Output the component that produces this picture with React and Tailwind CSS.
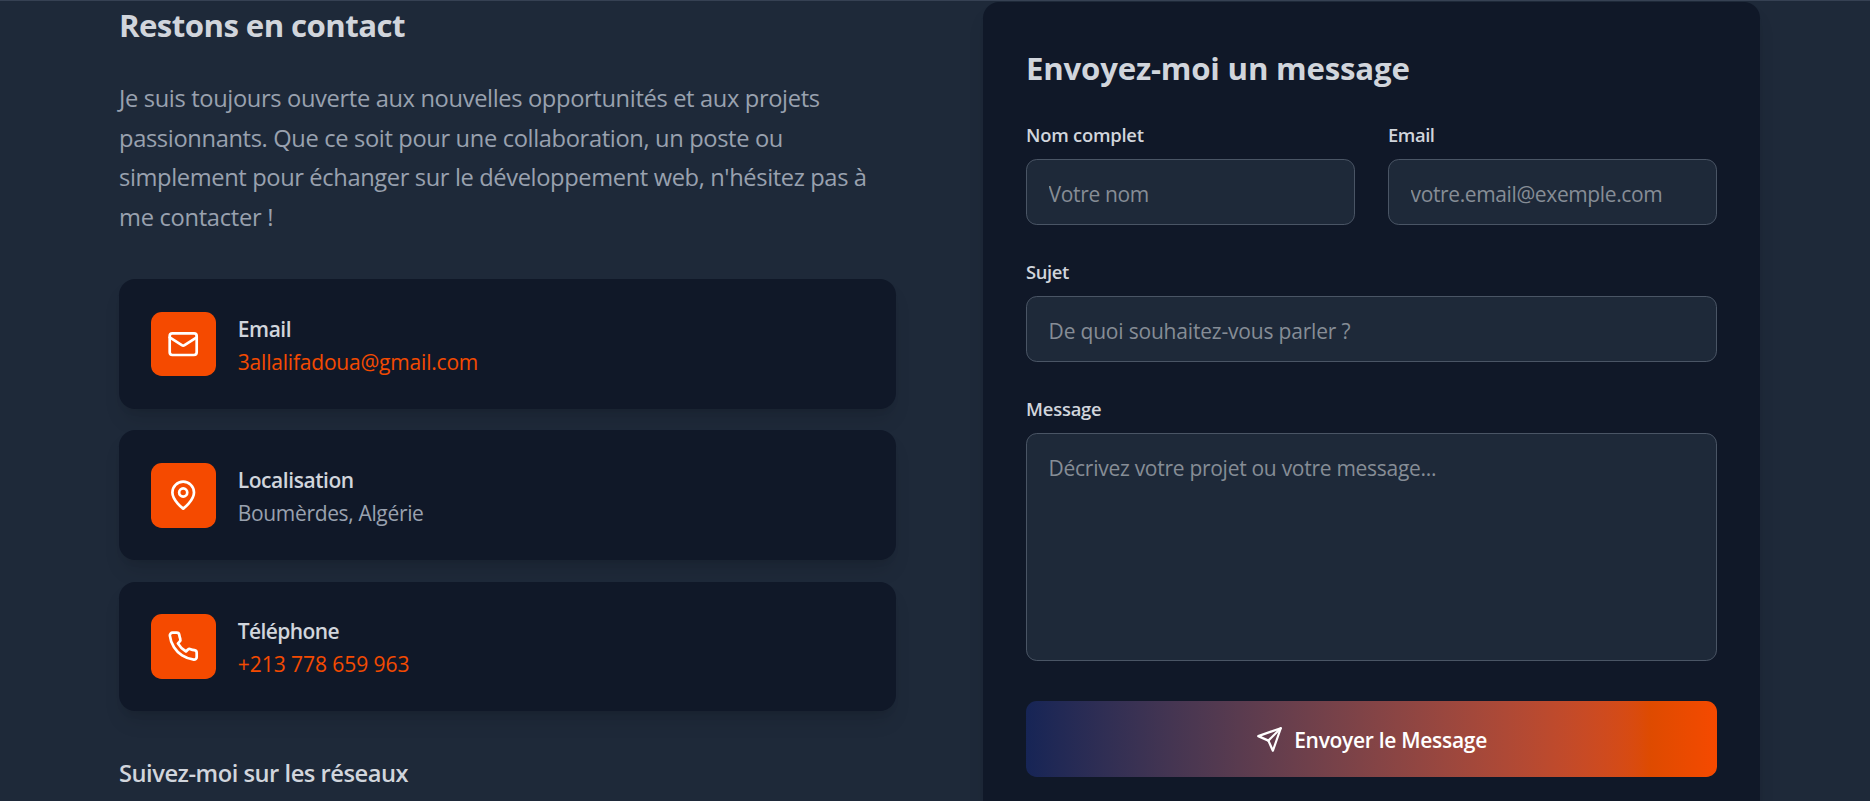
function Icon({ className, strokeWidth = 2, children }) {
  return (
    <svg
      viewBox="0 0 24 24"
      fill="none"
      stroke="currentColor"
      strokeWidth={strokeWidth}
      strokeLinecap="round"
      strokeLinejoin="round"
      className={className}
      aria-hidden="true"
    >
      {children}
    </svg>
  );
}

function MailIcon({ className }) {
  return (
    <Icon className={className}>
      <rect width="20" height="16" x="2" y="4" rx="2" />
      <path d="m22 7-8.97 5.7a1.94 1.94 0 0 1-2.06 0L2 7" />
    </Icon>
  );
}

function PinIcon({ className }) {
  return (
    <Icon className={className}>
      <path d="M20 10c0 6-8 12-8 12s-8-6-8-12a8 8 0 0 1 16 0Z" />
      <circle cx="12" cy="10" r="3" />
    </Icon>
  );
}

function PhoneIcon({ className }) {
  return (
    <Icon className={className}>
      <path d="M22 16.92v3a2 2 0 0 1-2.18 2 19.79 19.79 0 0 1-8.63-3.07 19.5 19.5 0 0 1-6-6 19.79 19.79 0 0 1-3.07-8.67A2 2 0 0 1 4.11 2h3a2 2 0 0 1 2 1.72 12.84 12.84 0 0 0 .7 2.81 2 2 0 0 1-.45 2.11L8.09 9.91a16 16 0 0 0 6 6l1.27-1.27a2 2 0 0 1 2.11-.45 12.84 12.84 0 0 0 2.81.7A2 2 0 0 1 22 16.92z" />
    </Icon>
  );
}

function SendIcon({ className }) {
  return (
    <Icon className={className}>
      <path d="m22 2-7 20-4-9-9-4Z" />
      <path d="M22 2 11 13" />
    </Icon>
  );
}

function ContactCard({ icon: IconComponent, title, titleClass, value, valueClass }) {
  return (
    <div className="flex h-[129.6px] items-start gap-[21.6px] rounded-[16.2px] bg-gray-900 p-[32.4px] shadow-[0_13.5px_20px_-4px_rgb(0_0_0/0.1),0_5.4px_8px_-5.4px_rgb(0_0_0/0.1)]">
      <div className="flex size-[64.8px] shrink-0 items-center justify-center rounded-[10.8px] bg-orange-600 pr-[1.5px] text-white">
        <IconComponent className="size-[32.4px]" />
      </div>
      <div className="pt-[1.2px] text-[21px] leading-[32.8px]">
        <h4 className={`font-semibold text-gray-300 ${titleClass}`}>{title}</h4>
        <p className={valueClass}>{value}</p>
      </div>
    </div>
  );
}

function Field({ label, labelClass, children }) {
  return (
    <label className="flex flex-col gap-[9px]">
      <span className={`text-[18.4px] leading-[30px] font-semibold text-gray-300 ${labelClass}`}>
        {label}
      </span>
      {children}
    </label>
  );
}

const control =
  "w-full rounded-[10.8px] border border-gray-600 bg-gray-800 px-[21.6px] text-[21px] text-gray-300 outline-none placeholder:text-[#868d96]";

export default function App() {
  return (
    <div className="h-[801px] overflow-hidden border-t border-gray-700 bg-gray-800 pt-px font-['Open_Sans','Noto_Sans',sans-serif]">
      <main className="ml-[119px] grid w-[1641px] grid-cols-[777px_777px] justify-between">
        <section>
          <h3 className="h-[43.2px] pt-[2px] text-[31.2px] leading-[43.2px] font-bold tracking-[-0.58px] text-gray-300">
            Restons en contact
          </h3>
          <p className="mt-[34.2px] mb-[41.8px] text-[23.7px] leading-[39.5px] whitespace-nowrap text-gray-400">
            <span className="tracking-[-0.36px]">
              Je suis toujours ouverte aux nouvelles opportunités et aux projets
            </span>
            <br />
            <span className="tracking-[-0.36px]">
              passionnants. Que ce soit pour une collaboration, un poste ou
            </span>
            <br />
            <span className="tracking-[-0.38px]">
              simplement pour échanger sur le développement web, n'hésitez pas à
            </span>
            <br />
            <span className="tracking-[-0.3px]">me contacter !</span>
          </p>
          <div className="flex flex-col gap-[21.6px]">
            <ContactCard
              icon={MailIcon}
              title="Email"
              titleClass="tracking-[-0.45px]"
              value="3allalifadoua@gmail.com"
              valueClass="tracking-[-0.2px] text-orange-600"
            />
            <ContactCard
              icon={PinIcon}
              title="Localisation"
              titleClass="tracking-[-0.45px]"
              value="Boumèrdes, Algérie"
              valueClass="tracking-[-0.34px] text-gray-400"
            />
            <ContactCard
              icon={PhoneIcon}
              title="Téléphone"
              titleClass="tracking-[-0.6px]"
              value="+213 778 659 963"
              valueClass="tracking-[-0.05px] text-orange-600"
            />
          </div>
          <h4 className="mt-[44px] text-[23.7px] leading-[37.8px] font-semibold tracking-[-0.48px] text-gray-300">
            Suivez-moi sur les réseaux
          </h4>
        </section>

        <section className="h-[860px] rounded-[16.2px] bg-gray-900 px-[43px] pt-[43px] shadow-[0_13.5px_20px_-4px_rgb(0_0_0/0.1),0_5.4px_8px_-5.4px_rgb(0_0_0/0.1)]">
          <h3 className="h-[43px] pt-[2px] text-[31.2px] leading-[43.2px] font-bold tracking-[-0.2px] text-gray-300">
            Envoyez-moi un message
          </h3>
          <form className="mt-8 flex flex-col gap-8" onSubmit={(e) => e.preventDefault()}>
            <div className="grid grid-cols-2 gap-[33px]">
              <Field label="Nom complet" labelClass="tracking-[-0.23px]">
                <input
                  type="text"
                  placeholder="Votre nom"
                  className={`${control} h-[66px] pt-[3px] tracking-[-0.35px]`}
                />
              </Field>
              <Field label="Email" labelClass="tracking-[-0.45px]">
                <input
                  type="email"
                  placeholder="votre.email@exemple.com"
                  className={`${control} h-[66px] pt-[3px] tracking-[-0.38px]`}
                />
              </Field>
            </div>
            <Field label="Sujet" labelClass="tracking-[-0.4px]">
              <input
                type="text"
                placeholder="De quoi souhaitez-vous parler ?"
                className={`${control} h-[66px] pt-[3px] tracking-[-0.19px]`}
              />
            </Field>
            <Field label="Message" labelClass="tracking-[-0.2px]">
              <textarea
                placeholder="Décrivez votre projet ou votre message..."
                className={`${control} block h-[228px] resize-none pt-[18px] leading-[32.4px] tracking-[-0.28px]`}
              />
            </Field>
            <button
              type="submit"
              className="mt-2 flex h-[76px] items-center justify-center gap-[11.2px] rounded-[10.8px] bg-linear-to-r from-blue-950 to-orange-600 text-[21px] leading-[32.4px] font-semibold text-white"
            >
              <SendIcon className="size-[27px]" />
              <span className="pt-[3px] tracking-[-0.3px]">Envoyer le Message</span>
            </button>
          </form>
        </section>
      </main>
    </div>
  );
}
